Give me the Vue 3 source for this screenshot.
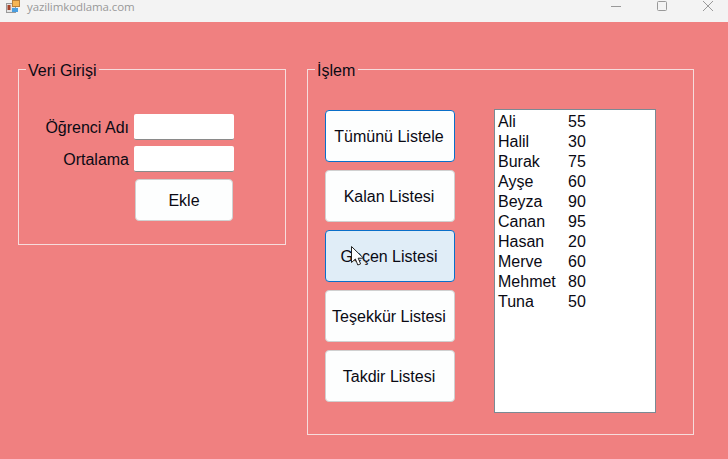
<script setup>
const buttons = [
  { label: 'Tümünü Listele', state: 'focused' },
  { label: 'Kalan Listesi', state: '' },
  { label: 'Geçen Listesi', state: 'hover' },
  { label: 'Teşekkür Listesi', state: '' },
  { label: 'Takdir Listesi', state: '' },
]
const students = [
  ['Ali', 55], ['Halil', 30], ['Burak', 75], ['Ayşe', 60], ['Beyza', 90],
  ['Canan', 95], ['Hasan', 20], ['Merve', 60], ['Mehmet', 80], ['Tuna', 50],
]
</script>

<template>
  <div class="window">
    <header class="titlebar">
      <svg class="app-icon" width="14" height="13" viewBox="0 0 14 13">
        <rect x="0.5" y="3.5" width="9" height="9" fill="#e4e4e4" stroke="#9a9a9a" stroke-width="1" />
        <rect x="1.5" y="5" width="3" height="5" fill="#a5432a" />
        <rect x="6.5" y="0.5" width="7" height="6" fill="#f6b554" stroke="#b9803a" stroke-width="1" />
        <rect x="6" y="8" width="6" height="4" fill="#4a9ee0" />
      </svg>
      <span class="title">yazilimkodlama.com</span>
      <div class="controls">
        <svg width="12" height="12" viewBox="0 0 12 12"><path d="M1 6.5H11" stroke="#999" fill="none" /></svg>
        <svg width="12" height="12" viewBox="0 0 12 12"><rect x="1.5" y="1.5" width="9" height="9" rx="1" stroke="#999" fill="none" /></svg>
        <svg width="12" height="12" viewBox="0 0 12 12"><path d="M1 1L11 11M11 1L1 11" stroke="#999" fill="none" /></svg>
      </div>
    </header>

    <main class="client">
      <section class="group group-input">
        <span class="legend">Veri Girişi</span>
        <div class="form">
          <label class="label">Öğrenci Adı</label>
          <input class="field" type="text" />
          <label class="label">Ortalama</label>
          <input class="field" type="text" />
          <button class="btn add" type="button">Ekle</button>
        </div>
      </section>

      <section class="group group-ops">
        <span class="legend">İşlem</span>
        <div class="ops">
          <div class="btn-col">
            <button
              v-for="b in buttons"
              :key="b.label"
              class="btn list-btn"
              :class="b.state"
              type="button"
            >{{ b.label }}</button>
          </div>
          <div class="listbox">
            <div v-for="s in students" :key="s[0]" class="row">
              <span class="name">{{ s[0] }}</span>
              <span>{{ s[1] }}</span>
            </div>
          </div>
        </div>
      </section>
    </main>

    <svg class="cursor" width="14" height="21" viewBox="0 0 14 21">
      <path d="M0.5 0.5V16.5L4.4 13L6.8 19L9.6 17.9L7.2 12.2H12.5Z" fill="#fff" stroke="#222" stroke-width="1" />
    </svg>
  </div>
</template>

<style>
html, body { margin: 0; }
</style>

<style scoped>
.window {
  position: relative;
  width: 728px;
  height: 459px;
  overflow: hidden;
  background: #f08080;
  font-family: "Liberation Sans", Arial, sans-serif;
  font-size: 16px;
  color: #0a0a14;
}
.titlebar {
  height: 22px;
  background: #f3f3f3;
  display: flex;
  align-items: flex-start;
  overflow: hidden;
}
.app-icon { margin: 0 0 0 6px; flex: none; }
.title {
  margin-left: 7px;
  font-family: "Open Sans", sans-serif;
  font-size: 11.5px;
  line-height: 14px;
  color: #999;
  letter-spacing: -0.1px;
}
.controls {
  margin-left: auto;
  display: flex;
  gap: 34px;
  padding: 0 14px 0 0;
}
.client {
  display: flex;
  align-items: flex-start;
  gap: 21px;
  padding: 47px 0 0 18px;
}
.group {
  position: relative;
  box-sizing: border-box;
  border: 1px solid #f6dcdc;
}
.group-input { width: 268px; height: 176px; }
.group-ops { width: 387px; height: 366px; }
.legend {
  position: absolute;
  top: -8px;
  left: 7px;
  padding: 0 3px 0 2px;
  background: #f08080;
  line-height: 18px;
}
.form {
  display: grid;
  grid-template-columns: 110px 100px;
  column-gap: 5px;
  row-gap: 6px;
  padding-top: 44px;
  align-items: center;
}
.label { text-align: right; padding-top: 2px; }
.field {
  box-sizing: border-box;
  width: 100px;
  height: 26px;
  border: 0;
  border-bottom: 1px solid #8a8a8a;
  border-radius: 2px;
  background: #fff;
  padding: 0;
}
.btn {
  box-sizing: border-box;
  margin: 0;
  padding: 2px 0 0;
  font: inherit;
  color: inherit;
  background: #fdfefe;
  border: 1px solid #d0d0d0;
  border-radius: 4px;
}
.add {
  grid-column: 2;
  width: 98px;
  height: 42px;
  margin: 1px 0 0 1px;
}
.ops {
  display: flex;
  align-items: flex-start;
  gap: 39px;
  padding: 40px 0 0 17px;
}
.btn-col {
  display: flex;
  flex-direction: column;
  gap: 8px;
}
.list-btn { width: 130px; height: 52px; padding-right: 2px; }
.list-btn.focused { border-color: #0a6fc9; }
.list-btn.hover { background: #e0edf7; border-color: #0a6fc9; }
.listbox {
  box-sizing: border-box;
  width: 162px;
  height: 304px;
  margin-top: -1px;
  padding: 2px 3px;
  background: #fff;
  border: 1px solid #7a8a94;
}
.row {
  display: flex;
  height: 20px;
  line-height: 20px;
}
.name { width: 70px; }
.cursor {
  position: absolute;
  left: 351px;
  top: 246px;
}
</style>
